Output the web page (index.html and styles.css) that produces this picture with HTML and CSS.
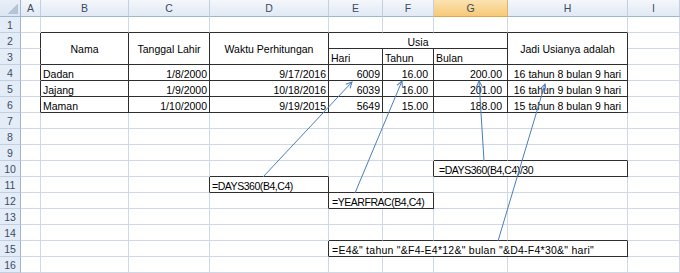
FILE: index.html
```html
<!DOCTYPE html>
<html>
<head>
<meta charset="utf-8">
<link rel="stylesheet" href="styles.css">
</head>
<body>
<div class="sheet">
  <!-- header row -->
  <div class="corner"><span class="tri"></span></div>
  <div class="ch">A</div><div class="ch">B</div><div class="ch">C</div><div class="ch">D</div><div class="ch">E</div><div class="ch">F</div><div class="ch sel">G</div><div class="ch">H</div><div class="ch">I</div>

  <!-- row 1 -->
  <div class="rh">1</div><div></div><div class="db"></div><div class="db"></div><div class="db"></div><div class="db"></div><div class="db"></div><div class="db"></div><div class="db"></div><div></div>

  <!-- row 2 -->
  <div class="rh">2</div><div class="dr"></div>
  <div class="t ctr mid r2">Nama</div>
  <div class="t ctr mid r2">Tanggal Lahir</div>
  <div class="t ctr mid r2">Waktu Perhitungan</div>
  <div class="t ctr c3">Usia</div>
  <div class="t ctr mid r2">Jadi Usianya adalah</div>
  <div></div>

  <!-- row 3 -->
  <div class="rh">3</div><div class="dr"></div>
  <div class="t">Hari</div><div class="t">Tahun</div><div class="t">Bulan</div>
  <div></div>

  <!-- row 4 -->
  <div class="rh">4</div><div class="dr"></div>
  <div class="t">Dadan</div><div class="t num">1/8/2000</div><div class="t num">9/17/2016</div><div class="t num">6009</div><div class="t num dec">16.00</div><div class="t num dec">200.00</div><div class="t ctr">16 tahun 8 bulan 9 hari</div>
  <div></div>

  <!-- row 5 -->
  <div class="rh">5</div><div class="dr"></div>
  <div class="t">Jajang</div><div class="t num">1/9/2000</div><div class="t num">10/18/2016</div><div class="t num">6039</div><div class="t num dec">16.00</div><div class="t num dec">201.00</div><div class="t ctr">16 tahun 9 bulan 9 hari</div>
  <div></div>

  <!-- row 6 -->
  <div class="rh">6</div><div class="dr"></div>
  <div class="t">Maman</div><div class="t num">1/10/2000</div><div class="t num">9/19/2015</div><div class="t num">5649</div><div class="t num dec">15.00</div><div class="t num dec">188.00</div><div class="t ctr">15 tahun 8 bulan 9 hari</div>
  <div></div>

  <!-- row 7 -->
  <div class="rh">7</div><div></div><div></div><div></div><div></div><div></div><div></div><div></div><div></div><div></div>
  <!-- row 8 -->
  <div class="rh">8</div><div></div><div></div><div></div><div></div><div></div><div></div><div></div><div></div><div></div>
  <!-- row 9 -->
  <div class="rh">9</div><div></div><div></div><div></div><div></div><div></div><div></div><div class="db"></div><div class="db"></div><div></div>

  <!-- row 10 -->
  <div class="rh">10</div><div></div><div></div><div></div><div class="db"></div><div></div><div class="dr"></div>
  <div class="t c2 p5 fcaps">=DAYS360(B4,C4)/30</div>
  <div></div>

  <!-- row 11 -->
  <div class="rh">11</div><div></div><div></div><div class="dr"></div>
  <div class="t fcaps">=DAYS360(B4,C4)</div>
  <div class="db"></div><div class="db"></div><div></div><div></div><div></div>

  <!-- row 12 -->
  <div class="rh">12</div><div></div><div></div><div></div><div class="dr"></div>
  <div class="t c2 p3 fcaps">=YEARFRAC(B4,C4)</div>
  <div></div><div></div><div></div>

  <!-- row 13 -->
  <div class="rh">13</div><div></div><div></div><div></div><div></div><div></div><div></div><div></div><div></div><div></div>
  <!-- row 14 -->
  <div class="rh">14</div><div></div><div></div><div></div><div></div><div class="db"></div><div class="db"></div><div class="db"></div><div class="db"></div><div></div>

  <!-- row 15 -->
  <div class="rh">15</div><div></div><div></div><div></div><div class="dr"></div>
  <div class="t c4 p3 fwide">=E4&amp;" tahun "&amp;F4-E4*12&amp;" bulan "&amp;D4-F4*30&amp;" hari"</div>
  <div></div>

  <!-- row 16 -->
  <div class="rh">16</div><div></div><div></div><div></div><div></div><div></div><div></div><div></div><div></div><div></div>

  <svg class="arrows" width="680" height="273" viewBox="0 0 680 273">
    <defs>
      <marker id="ah" markerWidth="8" markerHeight="8" refX="7" refY="4" orient="auto" markerUnits="userSpaceOnUse">
        <path d="M1,1 L7,4 L1,7" fill="none" stroke="#4a7ebb" stroke-width="1"/>
      </marker>
    </defs>
    <line x1="263" y1="177" x2="352" y2="82" marker-end="url(#ah)"/>
    <line x1="355" y1="193" x2="402" y2="81" marker-end="url(#ah)"/>
    <line x1="484" y1="161" x2="479" y2="81" marker-end="url(#ah)"/>
    <line x1="498" y1="241" x2="545" y2="84" marker-end="url(#ah)"/>
  </svg>
</div>
</body>
</html>
```
FILE: styles.css
```css
html, body {
  margin: 0;
  padding: 0;
  background: #ffffff;
}

.sheet {
  position: relative;
  display: grid;
  grid-template-columns: 21px 20px 88px 81px 119px 54px 51px 74px 120px 52px;
  grid-template-rows: 17px repeat(16, 16px);
  width: 680px;
  height: 273px;
  overflow: hidden;
  font-family: "Liberation Sans", Arial, sans-serif;
  font-size: 10.5px;
  color: #000;
}

.sheet > div {
  box-sizing: border-box;
  border-right: 1px solid #d0d7e5;
  border-bottom: 1px solid #d0d7e5;
  display: flex;
  align-items: flex-end;
  padding: 0 2px;
  line-height: 12px;
  white-space: nowrap;
  min-width: 0;
}

.sheet > .corner {
  background: linear-gradient(#e9eff8, #dbe5f2);
  border-right-color: #9eb6ce;
  border-bottom-color: #9eb6ce;
  padding: 0;
  position: relative;
}

.tri {
  position: absolute;
  right: 2px;
  bottom: 2px;
  width: 10px;
  height: 10px;
  background: linear-gradient(135deg, transparent 50%, #b4c4d8 50%);
}

.sheet > .ch {
  background: linear-gradient(#f4f7fb, #e1e9f4);
  border-right-color: #c3cfdf;
  border-bottom-color: #9eb6ce;
  justify-content: center;
  align-items: center;
  color: #3b4c63;
  padding: 0;
}

.sheet > .ch.sel {
  background: linear-gradient(#fbe3b1, #f6c977);
  border-right-color: #e0b36a;
  border-bottom-color: #e0a64f;
}

.sheet > .rh {
  background: #e4ecf7;
  border-right-color: #9eb6ce;
  border-bottom-color: #c3cfdf;
  justify-content: center;
  align-items: center;
  color: #3b4c63;
  padding: 0;
}

.sheet > .dr { border-right-color: #2e2e2e; }
.sheet > .db { border-bottom-color: #2e2e2e; }
.sheet > .t {
  border-right-color: #2e2e2e;
  border-bottom-color: #2e2e2e;
}

.sheet > .num { justify-content: flex-end; }
.sheet > .dec { padding-right: 5px; }
.sheet > .ctr { justify-content: center; }
.sheet > .mid { align-items: center; }
.sheet > .p3 { padding-left: 3px; }
.sheet > .p5 { padding-left: 5px; }

.fcaps { letter-spacing: -0.45px; }
.fwide { letter-spacing: 0.25px; }

.r2 { grid-row: span 2; }
.c2 { grid-column: span 2; }
.c3 { grid-column: span 3; }
.c4 { grid-column: span 4; }

.arrows {
  position: absolute;
  left: 0;
  top: 0;
  pointer-events: none;
}

.arrows line {
  stroke: #4a7ebb;
  stroke-width: 1;
}
```
